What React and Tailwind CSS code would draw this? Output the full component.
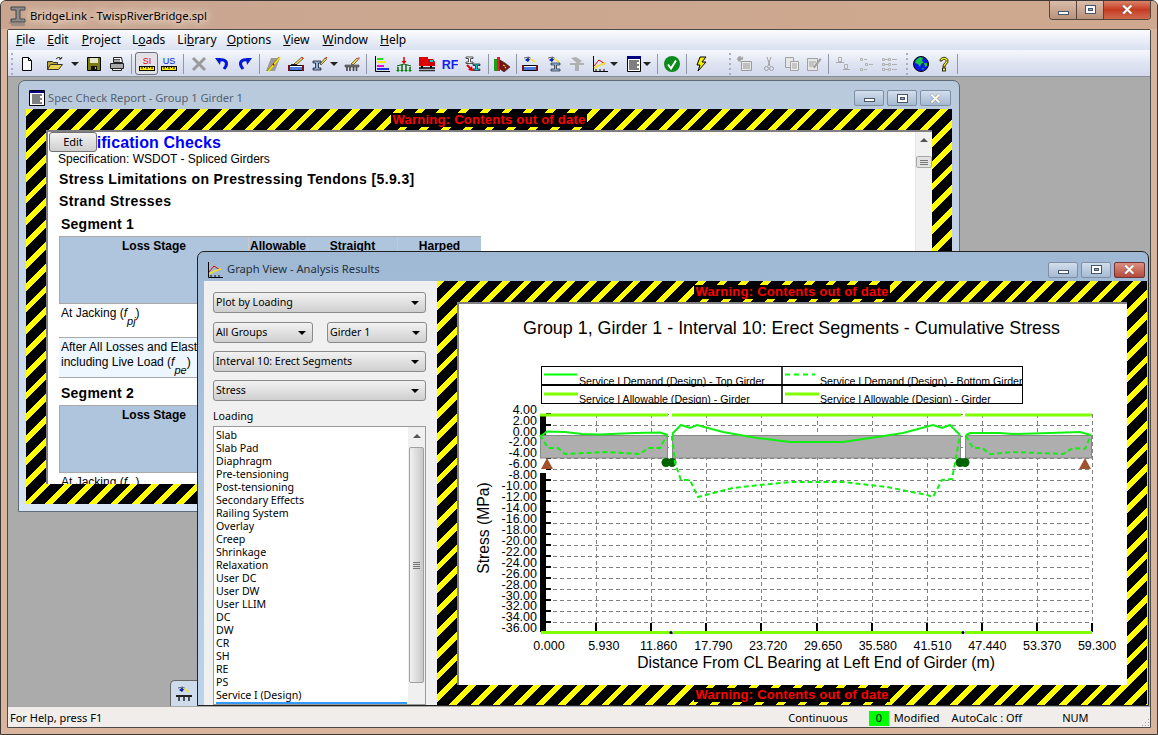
import React from 'react';

const UI = "[font-family:'Noto_Sans',sans-serif]";
const HAZARD = 'bg-[repeating-linear-gradient(135deg,#ffff00_0,#ffff00_5.5px,#000_5.5px,#000_15.4px)]';

// --- toolbar icons, all on a 16 box ---
const Svg = ({ children }) => (
  <svg width="16" height="16" viewBox="0 0 16 16" className="block">{children}</svg>
);

const NewIcon = () => <Svg><path d="M3.5 1.5h6l3 3v10h-9z" fill="#fff" stroke="#000" /><path d="M9.5 1.5v3h3" fill="none" stroke="#000" /></Svg>;
const OpenIcon = () => (
  <svg width="18" height="16" viewBox="0 0 18 16" className="block">
    <path d="M1.5 5.5h5l1 1h4v7h-10z" fill="#b8a53a" stroke="#333" />
    <path d="M1.5 13.5l3-5h12l-4 5z" fill="#e8d24a" stroke="#333" />
    <path d="M10 3c2-2 4-2 5 0M15 3l1-2M15 3l-2 0" fill="none" stroke="#111" />
  </svg>
);
const SaveIcon = () => <Svg><path d="M1.5 1.5h13v13h-13z" fill="#7b7b12" stroke="#000" /><path d="M4 2h8v5H4z" fill="#e6e6c8" /><path d="M5 10h6v4H5z" fill="#111" /><path d="M9 11h1v2H9z" fill="#bbb" /></Svg>;
const PrintIcon = () => <Svg><path d="M4.5 1.5h8l1 5h-9z" fill="#fff" stroke="#222" /><path d="M1.5 7.5h13v5h-13z" fill="#a8a8a8" stroke="#222" /><path d="M3.5 12.5h9v2h-9z" fill="#fff" stroke="#222" /><path d="M5 3.5h6M5 5h6" stroke="#555" /></Svg>;
const Ruler = ({ label, color }) => (
  <svg width="16" height="16" viewBox="0 0 16 16" className="block">
    <text x="8" y="8" textAnchor="middle" fontSize="9" fontFamily="Liberation Sans" fill={color}>{label}</text>
    <rect x="0.5" y="10.5" width="15" height="4" fill="#ffe800" stroke="#000" />
    <path d="M3 11v2M5.5 11v1M8 11v2M10.5 11v1M13 11v2" stroke="#000" />
  </svg>
);
const CrossIcon = () => <Svg><path d="M2 2l12 12M14 2L2 14" stroke="#9a9a9a" strokeWidth="3" /></Svg>;
const UndoIcon = () => <Svg><path d="M4 5c5-3 10 0 8 5l-2 3" fill="none" stroke="#0018d8" strokeWidth="3" /><path d="M1 2l6 0-1 7z" fill="#0018d8" /></Svg>;
const RedoIcon = () => <Svg><path d="M12 5C7 2 2 5 4 10l2 3" fill="none" stroke="#0018d8" strokeWidth="3" /><path d="M15 2l-6 0 1 7z" fill="#0018d8" /></Svg>;
const PencilBeam = () => <Svg><path d="M1 15l5-13h9l-5 13z" fill="#9a9a9a" /><path d="M3 15L15 1" stroke="#f5e400" strokeWidth="2" /><path d="M8 9l1-1" stroke="#d00" strokeWidth="2" /><path d="M2 15L14 1" stroke="#333" strokeWidth="0.5" /></Svg>;
const Deck = ({ top }) => (
  <Svg>
    {top}
    <path d="M0.5 9.5h15v5h-15z" fill="#fff" stroke="#000" />
    <path d="M2 11h12v3H2z" fill="#4b7be0" />
    <path d="M0 9h2v6H0zM14 9h2v6h-2z" fill="#7a1010" />
  </Svg>
);
const Pencil = <g><path d="M6 8l8-7 1.5 1.5L8 9z" fill="#f2d23c" stroke="#222" strokeWidth="0.6" /><path d="M13 1l2 0 0 2z" fill="#d02020" /><path d="M3 8.5h6" stroke="#222" /></g>;
const IPencil = () => (
  <Svg>
    <path d="M2 5h8v2H7.5v5H10v2H2v-2h2.5V7H2z" fill="#8fb4e6" stroke="#1a1a1a" strokeWidth="0.8" />
    <path d="M9 8l5-6 1.5 1.5L10 9z" fill="#f2d23c" stroke="#222" strokeWidth="0.6" />
    <path d="M14 1l2 0 0 2z" fill="#d02020" />
  </Svg>
);
const BrushIcon = () => <Svg><path d="M7 8l6-6 1.5 1.5L9 9z" fill="#f2d23c" stroke="#222" strokeWidth="0.6" /><path d="M13.5 1.5l2 0 0 2z" fill="#d02020" /><path d="M1 9h14v2H1z" fill="#777" stroke="#222" strokeWidth="0.5" /><path d="M3 11v4M6 11v4M9.5 11v4M12.5 11v4" stroke="#444" strokeWidth="1.6" /></Svg>;
const BarsIcon = () => <Svg><path d="M1.5 0v15.5H16" fill="none" stroke="#000" /><path d="M3 2h6v2H3z" fill="#1ee01e" /><path d="M3 5h9v2H3z" fill="#f4f000" /><path d="M3 9h7v2H3z" fill="#e010d0" /><path d="M3 12h12v2H3z" fill="#2030e0" /></Svg>;
const LoadsIcon = () => <Svg><path d="M8 1v5" stroke="#e00000" strokeWidth="1.5" /><path d="M5.5 5h5L8 8z" fill="#e00000" /><path d="M1 10l7-2 7 2" fill="none" stroke="#006000" /><path d="M2 11v4M6 9v6M10 9v6M14 11v4" stroke="#006000" strokeWidth="1.4" /><path d="M0 14h4l-2 2zM4 14h4l-2 2zM8 14h4l-2 2zM12 14h4l-2 2z" fill="#008000" /></Svg>;
const TruckIcon = () => <Svg><path d="M0 1h9v9H0z" fill="#e00000" /><path d="M9 3h5l2 3v4H9z" fill="#d00000" /><path d="M11 4h3v2h-3z" fill="#18c8c8" /><path d="M0 12h16" stroke="#000" strokeWidth="1.5" /><path d="M2 10h2v2H2zM11 10h2v2h-2z" fill="#000" /><path d="M0 14.5h16" stroke="#333" strokeWidth="1.5" /></Svg>;
const RfIcon = () => <Svg><text x="8" y="12.5" textAnchor="middle" fontSize="12.5" fontWeight="700" fontFamily="Liberation Sans" fill="#1020f0">RF</text></Svg>;
const BeamArrows = () => <Svg><path d="M1 1h7v1.5H5.5V6H8v1.5H1V6h2.5V2.5H1z" fill="#fff" stroke="#111" strokeWidth="0.7" /><path d="M8 8h7v1.5h-2.5V13H15v1.5H8V13h2.5V9.5H8z" fill="#20c8c8" stroke="#111" strokeWidth="0.7" /><path d="M2 9l5 5" stroke="#e00000" strokeWidth="2" /><path d="M8 15l-1-5-4 4z" fill="#e00000" /></Svg>;
const BookIcon = () => <Svg><path d="M0 3h3v12H0z" fill="#18a018" /><path d="M3 1h3v14H3z" fill="#e02020" /><path d="M6 4l5 3 5 4-6 5-4-3z" fill="#7a1515" stroke="#222" strokeWidth="0.6" /><path d="M9 9l2 1M11 12l1-1" stroke="#e8c040" strokeWidth="1.2" /></Svg>;
const EyeTop = <g><path d="M3 4l4-3 2 1-3 4z" fill="#0a20c0" /><path d="M7 2l6 4" stroke="#f2e020" strokeWidth="1.5" /><path d="M2 2l5-1" stroke="#666" /></g>;
const BeamEye = () => <Svg>{EyeTop}<path d="M5 7h9v2h-3.5v4H14v2H5v-2h3.5V9H5z" fill="#8fb4e6" stroke="#222" strokeWidth="0.7" /></Svg>;
const GrayBeam = () => <Svg><path d="M2 2l5-1 6 4-4 3z" fill="#b0b0b0" /><path d="M1 7h14v2h-5v6H6V9H1z" fill="#b0b0b0" /></Svg>;
const ChartIcon = () => <Svg><path d="M1.5 0v15.5H16" fill="none" stroke="#000" /><path d="M2 10l5-6 6 4" fill="none" stroke="#e00000" /><path d="M2 12l6-3 6-2" fill="none" stroke="#f2e020" strokeWidth="1.5" /><path d="M4 13v2M8 13v2M12 13v2" stroke="#000" /></Svg>;
const ReportIcon = () => <Svg><path d="M1.5 0.5h13v15h-13z" fill="#fff" stroke="#000" /><path d="M1 0h14v3H1z" fill="#000080" /><path d="M3 5h10M3 7h8M3 9h10M3 11h8M3 13h10" stroke="#000" /></Svg>;
const CheckIcon = () => <Svg><circle cx="8" cy="8" r="8" fill="#0c8a1c" /><path d="M4 8.5l3 4 5-8" fill="none" stroke="#fff" strokeWidth="2" /></Svg>;
const BoltIcon = () => <Svg><path d="M7 1h6L9 6h4l-8 9 2-6H4z" fill="#f8f000" stroke="#000" /></Svg>;
const GrayDoc = () => <Svg><path d="M4.5 5.5h10v9h-10z" fill="#e6e6e6" stroke="#9a9a9a" /><path d="M6 8h7M6 10h7M6 12h7" stroke="#9a9a9a" /><path d="M1 1l3 3M6 1L1 5M3 0v6M0 3h6" stroke="#a0a0a0" strokeWidth="1.4" /></Svg>;
const ScissorsIcon = () => <Svg><path d="M6 1l3 9M10 1L7 10" stroke="#a0a0a0" /><circle cx="5.5" cy="12.5" r="2" fill="none" stroke="#a0a0a0" /><circle cx="10.5" cy="12.5" r="2" fill="none" stroke="#a0a0a0" /></Svg>;
const CopyIcon = () => <Svg><path d="M1.5 1.5h8v10h-8z" fill="#e6e6e6" stroke="#a0a0a0" /><path d="M6.5 5.5h8v9h-8z" fill="#eee" stroke="#a0a0a0" /><path d="M8 8h5M8 10h5M8 12h5" stroke="#a0a0a0" /></Svg>;
const PasteEdit = () => <Svg><path d="M1.5 2.5h10v12h-10z" fill="#e6e6e6" stroke="#a0a0a0" /><path d="M3 6h7M3 8h5M3 10h5" stroke="#a0a0a0" /><path d="M7 11l7-9 1.5 1.5-7 9z" fill="#a0a0a0" /></Svg>;
const Align1 = () => <Svg><path d="M3.5 1.5h3v4h-3zM9.5 8.5h3v4h-3z" fill="none" stroke="#b0b0b0" /><path d="M1 6.5h8M8 13.5h7" stroke="#a8a8a8" /></Svg>;
const Align2 = () => <Svg><path d="M1.5 2.5h2v2h-2zM6.5 7.5h2v2h-2zM1.5 12.5h2v2h-2z" fill="none" stroke="#b0b0b0" /><path d="M5 3.5h3M10 8.5h4M5 13.5h3" stroke="#b0b0b0" /></Svg>;
const Align3 = () => <Svg><path d="M0.5 2.5h2v2h-2zM6.5 2.5h2v2h-2zM0.5 7.5h2v2h-2zM6.5 7.5h2v2h-2zM0.5 12.5h2v2h-2zM6.5 12.5h2v2h-2z" fill="none" stroke="#b0b0b0" /><path d="M3 3.5h3M10 3.5h5M3 8.5h3M10 8.5h5M3 13.5h3M10 13.5h5" stroke="#b0b0b0" /></Svg>;
const GlobeIcon = () => <Svg><circle cx="8" cy="8" r="7.5" fill="#0818e8" stroke="#000" /><path d="M3 4l4-3 3 1-1 3 2 1-3 2-1 3-2-3-3-1zM11 7l3 0 0 3-2 1zM9 12l2 0-1 2z" fill="#18c838" /></Svg>;
const HelpIcon = () => <Svg><path d="M4 5c0-5 8-5 8 0 0 3-3 3-3 6H7c0-4 3-4 3-6 0-2-4-2-4 0z" fill="#f8f000" stroke="#000" strokeWidth="0.8" /><rect x="6.5" y="12" width="3" height="3" fill="#f8f000" stroke="#000" strokeWidth="0.8" /></Svg>;

const Arrow = () => <span className="block w-0 h-0 border-x-[4px] border-x-transparent border-t-[4px] border-t-[#222]" />;
const Sep = ({ c }) => <span className={`block w-px h-[20px] bg-[#8f97a8] ${c}`} />;
const Grip = ({ c }) => (
  <span className={`flex flex-col gap-[3px] w-[3px] ${c}`}>
    {[0, 1, 2, 3, 4].map((i) => <span key={i} className="block w-[2px] h-[2px] bg-[#a9afbd]" />)}
  </span>
);
const Tool = ({ c, children }) => <span className={`block shrink-0 ${c}`}>{children}</span>;

const Toolbar = () => (
  <div className="h-[26px] flex items-center shrink-0 bg-gradient-to-b from-[#f4f6fc] via-[#dfe4f2] to-[#d2d9ec] border-b border-[#8b8f9c]">
    <Grip c="ml-[3px]" />
    <Tool c="ml-[5px]"><NewIcon /></Tool>
    <Tool c="ml-[11px]"><OpenIcon /></Tool>
    <Tool c="ml-[7px]"><Arrow /></Tool>
    <Tool c="ml-[7px]"><SaveIcon /></Tool>
    <Tool c="ml-[7px]"><PrintIcon /></Tool>
    <Sep c="ml-[6px]" />
    <Tool c="ml-[3px] w-[23px] h-[23px] flex items-center justify-center border border-[#6d7280] rounded-[3px] bg-[#e2e2e6]"><Ruler label="SI" color="#e00000" /></Tool>
    <Tool c="ml-[3px]"><Ruler label="US" color="#0020e0" /></Tool>
    <Sep c="ml-[6px]" />
    <Tool c="ml-[7px]"><CrossIcon /></Tool>
    <Tool c="ml-[7px]"><UndoIcon /></Tool>
    <Tool c="ml-[7px]"><RedoIcon /></Tool>
    <Sep c="ml-[6px]" />
    <Tool c="ml-[5px]"><PencilBeam /></Tool>
    <Tool c="ml-[7px]"><Deck top={Pencil} /></Tool>
    <Tool c="ml-[7px]"><IPencil /></Tool>
    <Tool c="ml-[3px]"><Arrow /></Tool>
    <Tool c="ml-[6px]"><BrushIcon /></Tool>
    <Sep c="ml-[6px]" />
    <Tool c="ml-[7px]"><BarsIcon /></Tool>
    <Tool c="ml-[6px]"><LoadsIcon /></Tool>
    <Tool c="ml-[7px]"><TruckIcon /></Tool>
    <Tool c="ml-[7px]"><RfIcon /></Tool>
    <Tool c="ml-[7px]"><BeamArrows /></Tool>
    <Sep c="ml-[7px]" />
    <Tool c="ml-[5px]"><BookIcon /></Tool>
    <Sep c="ml-[6px]" />
    <Tool c="ml-[5px]"><Deck top={EyeTop} /></Tool>
    <Tool c="ml-[8px]"><BeamEye /></Tool>
    <Tool c="ml-[7px]"><GrayBeam /></Tool>
    <Tool c="ml-[7px]"><ChartIcon /></Tool>
    <Tool c="ml-[2px]"><Arrow /></Tool>
    <Tool c="ml-[8px]"><ReportIcon /></Tool>
    <Tool c="ml-[1px]"><Arrow /></Tool>
    <Sep c="ml-[6px]" />
    <Tool c="ml-[6px]"><CheckIcon /></Tool>
    <Sep c="ml-[6px]" />
    <Tool c="ml-[6px]"><BoltIcon /></Tool>
    <Grip c="ml-[20px]" />
    <Tool c="ml-[5px]"><GrayDoc /></Tool>
    <Tool c="ml-[8px]"><ScissorsIcon /></Tool>
    <Tool c="ml-[7px]"><CopyIcon /></Tool>
    <Tool c="ml-[6px]"><PasteEdit /></Tool>
    <Sep c="ml-[6px]" />
    <Tool c="ml-[6px]"><Align1 /></Tool>
    <Tool c="ml-[8px]"><Align2 /></Tool>
    <Tool c="ml-[7px]"><Align3 /></Tool>
    <Grip c="ml-[8px]" />
    <Tool c="ml-[4px]"><GlobeIcon /></Tool>
    <Tool c="ml-[7px]"><HelpIcon /></Tool>
    <Sep c="ml-[5px]" />
  </div>
);

const Menu = () => {
  const items = [
    ['', 'F', 'ile', 'ml-[8px]'],
    ['', 'E', 'dit', 'ml-[12px]'],
    ['', 'P', 'roject', 'ml-[13px]'],
    ['L', 'o', 'ads', 'ml-[11px]'],
    ['Li', 'b', 'rary', 'ml-[12px]'],
    ['', 'O', 'ptions', 'ml-[10px]'],
    ['', 'V', 'iew', 'ml-[12px]'],
    ['', 'W', 'indow', 'ml-[13px]'],
    ['', 'H', 'elp', 'ml-[12px]'],
  ];
  return (
    <div className={`h-[21px] flex items-center shrink-0 text-[12px] text-black bg-gradient-to-b from-[#fbfcff] to-[#d9e0f0] border-b border-[#f4f6fc] ${UI}`}>
      {items.map(([a, b, c, m]) => (
        <span key={b + c} className={m}>{a}<span className="underline">{b}</span>{c}</span>
      ))}
    </div>
  );
};

// --- caption buttons ---
const MinGlyph = () => <span className="block w-[11px] h-[4px] bg-white border border-[#45566b]" />;
const MaxGlyph = () => <span className="flex items-center justify-center w-[11px] h-[9px] bg-white border border-[#45566b]"><span className="block w-[5px] h-[3px] bg-[#8ea4bd] border border-[#45566b]" /></span>;
const CloseGlyph = () => <span className="block text-[15px] leading-none font-bold text-white [font-family:'Liberation_Sans',sans-serif] [text-shadow:0_0_1px_#333]">✕</span>;

const ChildButtons = ({ active }) => (
  <div className="ml-auto flex gap-[3px] mr-[3px]">
    <span className="w-[30px] h-[16px] flex items-end justify-center pb-[3px] rounded-[2px] border border-[#7d8ea5] bg-gradient-to-b from-[#d2deec] to-[#a5bad2]"><MinGlyph /></span>
    <span className="w-[30px] h-[16px] flex items-center justify-center rounded-[2px] border border-[#7d8ea5] bg-gradient-to-b from-[#d2deec] to-[#a5bad2]"><MaxGlyph /></span>
    <span className={`w-[31px] h-[16px] flex items-center justify-center rounded-[2px] border ${active ? 'border-[#6f3530] bg-gradient-to-b from-[#dd8f82] to-[#b24a3c]' : 'border-[#7d8ea5] bg-gradient-to-b from-[#d2deec] to-[#a5bad2]'}`}><CloseGlyph /></span>
  </div>
);

// --- hazard frame with the red warning ---
const Warning = () => (
  <span className="block bg-black text-[#ff0000] font-bold text-[13px] leading-[14px] tracking-[0.25px] px-px [font-family:'Liberation_Sans',sans-serif] whitespace-nowrap">
    Warning: Contents out of date
  </span>
);

const Hazard = ({ className, children, bottomWarning }) => (
  <div className={`flex flex-col ${HAZARD} ${className}`}>
    <div className="h-[21px] shrink-0 flex items-center justify-center"><Warning /></div>
    <div className="flex-1 min-h-0 mx-[20px] flex">{children}</div>
    <div className="h-[20px] shrink-0 flex items-center justify-center">{bottomWarning && <Warning />}</div>
  </div>
);

// --- report behind ---
const Fp = ({ sub }) => (
  <span>(<i>f</i><sub className="italic text-[11px] align-[-5px] leading-none">{sub}</sub>)</span>
);
const HeaderRow = ({ h }) => (
  <div className={`grid grid-cols-[188px_58px_89px_83px] gap-x-px ${h} text-[12px] font-bold text-center leading-[15px]`}>
    <div className="bg-[#afc4dd] pt-[2px]">Loss Stage</div>
    <div className="bg-[#afc4dd] pt-[2px]">Allowable</div>
    <div className="bg-[#afc4dd] pt-[2px]">Straight</div>
    <div className="bg-[#afc4dd] pt-[2px]">Harped</div>
  </div>
);

const Report = () => (
  <div className="relative flex-1 min-w-0 overflow-hidden bg-white border-t-2 border-l-2 border-[#808080] flex [font-family:'Liberation_Sans',sans-serif] text-black">
    <div className="flex-1 min-w-0 pl-[10px]">
      <div className="h-[20px] text-[16px] leading-[21px] font-bold tracking-[0.1px] text-[#0000ff]">Specification Checks</div>
      <div className="text-[12px] leading-[14px]">Specification: WSDOT - Spliced Girders</div>
      <div className="ml-[1px] mt-[4px] text-[14px] leading-[18px] font-bold tracking-[0.38px]">Stress Limitations on Prestressing Tendons [5.9.3]</div>
      <div className="ml-[1px] mt-[4px] text-[14px] leading-[18px] font-bold tracking-[0.38px]">Strand Stresses</div>
      <div className="ml-[3px] mt-[5px] text-[14px] leading-[18px] font-bold tracking-[0.25px]">Segment 1</div>
      <div className="ml-[1px] mt-[3px] w-[422px] border-t border-x border-[#a9a9a9] bg-[#c8c8c8]">
        <HeaderRow h="h-[66px]" />
      </div>
      <div className="ml-[1px] w-[422px] h-[34px] border-t border-[#a9a9a9] bg-white text-[12px] px-[2px] pt-[2px] leading-[15px]">At Jacking <Fp sub="pj" /></div>
      <div className="ml-[1px] w-[422px] h-[41px] border-t border-b border-[#a9a9a9] bg-[#eef6ff] text-[12px] px-[2px] pt-[2px] leading-[15px]">
        After All Losses and Elastic Gains<br />including Live Load <Fp sub="pe" />
      </div>
      <div className="ml-[3px] mt-[6px] text-[14px] leading-[18px] font-bold tracking-[0.25px]">Segment 2</div>
      <div className="ml-[1px] mt-[3px] w-[422px] border-t border-x border-[#a9a9a9] bg-[#c8c8c8]">
        <HeaderRow h="h-[66px]" />
      </div>
      <div className="ml-[1px] w-[422px] border-t border-[#a9a9a9] text-[12px] px-[2px] pt-[2px] leading-[15px]">At Jacking <Fp sub="pj" /></div>
    </div>
    <div className="w-[17px] shrink-0 bg-[#f1f1f1] flex flex-col items-center pt-[6px] border-l border-[#e4e4e4]">
      <span className="block w-0 h-0 border-x-[4px] border-x-transparent border-b-[4px] border-b-[#555]" />
      <span className="mt-[14px] w-[16px] h-[12px] flex flex-col items-center justify-center gap-px bg-[#e2e2e2] border border-[#a8a8a8] rounded-[2px]">
        <span className="block w-[8px] h-px bg-[#777]" /><span className="block w-[8px] h-px bg-[#777]" /><span className="block w-[8px] h-px bg-[#777]" />
      </span>
    </div>
    <button className="absolute left-[1px] top-0 w-[48px] h-[20px] rounded-[3px] border border-[#707070] bg-gradient-to-b from-[#f2f2f2] to-[#cfcfcf] text-[11px] text-black [font-family:'Noto_Sans',sans-serif]">Edit</button>
  </div>
);

// --- graph panel ---
const Select = ({ c, children }) => (
  <div className={`h-[21px] flex items-center pl-[2px] pr-[6px] rounded-[3px] border border-[#8a8a8a] bg-gradient-to-b from-[#f2f2f2] to-[#cfcfcf] text-[10.6px] text-black ${c}`}>
    <span className="pt-[1px]">{children}</span>
    <span className="ml-auto block w-0 h-0 border-x-[4px] border-x-transparent border-t-[4px] border-t-black" />
  </div>
);

const LOADINGS = ['Slab', 'Slab Pad', 'Diaphragm', 'Pre-tensioning', 'Post-tensioning', 'Secondary Effects', 'Railing System', 'Overlay', 'Creep', 'Shrinkage', 'Relaxation', 'User DC', 'User DW', 'User LLIM', 'DC', 'DW', 'CR', 'SH', 'RE', 'PS', 'Service I (Design)'];

const Panel = () => (
  <div className={`w-[233px] shrink-0 bg-[#f0f0f0] pl-[9px] pt-[11px] flex flex-col overflow-hidden ${UI}`}>
    <Select c="w-[213px]">Plot by Loading</Select>
    <div className="flex gap-[14px] mt-[9px]">
      <Select c="w-[100px]">All Groups</Select>
      <Select c="w-[100px]">Girder 1</Select>
    </div>
    <Select c="w-[213px] mt-[8px]">Interval 10: Erect Segments</Select>
    <Select c="w-[213px] mt-[8px]">Stress</Select>
    <div className="mt-[8px] text-[10.6px] leading-[15px] text-black">Loading</div>
    <div className="mt-[2px] w-[213px] flex-1 min-h-0 bg-white border border-[#9a9a9a] flex overflow-hidden">
      <div className="flex-1 min-w-0 pt-[2px] pl-[2px] text-[10.6px] leading-[13px] text-black">
        {LOADINGS.map((l) => <div key={l} className="h-[13px] whitespace-nowrap">{l}</div>)}
        <div className="h-[13px] mr-[1px] bg-[#3399ff] text-white whitespace-nowrap">Service I Demand (Design)</div>
      </div>
      <div className="w-[17px] shrink-0 bg-[#f0f0f0] flex flex-col items-center pt-[7px]">
        <span className="block w-0 h-0 border-x-[4px] border-x-transparent border-b-[4px] border-b-[#555]" />
        <div className="mt-[9px] w-[15px] h-[236px] rounded-[2px] border border-[#a0a0a0] bg-gradient-to-r from-[#f2f2f2] to-[#c8c8c8] flex flex-col items-center justify-center gap-px">
          <span className="block w-[7px] h-px bg-[#777]" /><span className="block w-[7px] h-px bg-[#777]" /><span className="block w-[7px] h-px bg-[#777]" /><span className="block w-[7px] h-px bg-[#777]" />
        </div>
      </div>
    </div>
  </div>
);

// --- chart, in page coordinates ---
const TOP_L = '541,436 547,431.5 565,432 582,434 600,434.5 635,433 660,432.5 668,435';
const TOP_M = '672,440 673,433 681,425 690,428 697,425 723,432 757,438 790,442 843,442 877,437 903,433 933,425 942,428 950,425 960,435';
const TOP_R = '966,435 970,433 1000,433 1013,434 1050,433 1080,432 1091,435';
const BOT_L = '540,435 548,448 558,448 565,454 607,452 640,454 648,448 660,448 667,435';
const BOT_M = '672,436 675,463 681,480 690,480 698,497 733,488 760,485 790,482 843,482 887,487 927,495 933,497 942,480 952,479 955,463 960,435';
const BOT_R = '966,436 973,448 982,448 990,454 1013,452 1063,454 1073,448 1085,449 1091,435';
const XTICKS = [541, 596, 651, 706.3, 761.4, 816.5, 871.6, 926.7, 981.8, 1036.9, 1092];
const XLABELS = ['0.000', '5.930', '11.860', '17.790', '23.720', '29.650', '35.580', '41.510', '47.440', '53.370', '59.300'];
const YLABELS = ['4.00', '2.00', '0.00', '-2.00', '-4.00', '-6.00', '-8.00', '-10.00', '-12.00', '-14.00', '-16.00', '-18.00', '-20.00', '-22.00', '-24.00', '-26.00', '-28.00', '-30.00', '-32.00', '-34.00', '-36.00'];

const Chart = () => (
  <div className="flex-1 min-w-0 bg-white border-t-2 border-l-2 border-[#808080]">
    <svg width="668" height="381" viewBox="459 304 668 381" className="block" fontFamily="Liberation Sans" fill="#000">
      <text x="791.5" y="334" textAnchor="middle" fontSize="17.9">Group 1, Girder 1 - Interval 10: Erect Segments - Cumulative Stress</text>

      {/* legend */}
      <text x="579" y="385" fontSize="10.6">Service I Demand (Design) - Top Girder</text>
      <text x="820" y="385" fontSize="10.6">Service I Demand (Design) - Bottom Girder</text>
      <text x="579" y="403" fontSize="10.6">Service I Allowable (Design) - Girder</text>
      <text x="820" y="403" fontSize="10.6">Service I Allowable (Design) - Girder</text>
      <rect x="542" y="404" width="481" height="5" fill="#fff" />
      <rect x="541.5" y="366.5" width="481" height="37" fill="none" stroke="#000" />
      <path d="M541 385h482" stroke="#000" strokeWidth="2" />
      <path d="M782 366v38" stroke="#000" strokeWidth="1.5" />
      <path d="M544 374.5h33" stroke="#00ff00" strokeWidth="2" />
      <path d="M785 374.5h30" stroke="#00ff00" strokeWidth="2" strokeDasharray="5 4" />
      <path d="M544 394h34M785 394h34" stroke="#80ff00" strokeWidth="3" />

      {/* grid */}
      {YLABELS.map((_, i) => (
        <path key={i} d={`M546 ${Math.round(414 + i * 10.93) + 0.5}H1092`} stroke="#808080" strokeDasharray="4 3" />
      ))}
      {XTICKS.slice(1).map((x) => (
        <path key={x} d={`M${Math.round(x) + 0.5} 414V632`} stroke="#808080" strokeDasharray="4 3" />
      ))}

      {/* axis marks */}
      <rect x="540" y="414" width="6" height="21" fill="#000" />
      <rect x="540" y="473" width="6" height="159" fill="#000" />
      {YLABELS.map((_, i) => <rect key={i} x="546" y={Math.round(414 + i * 10.93) - 1} width="5" height="2" fill="#000" />)}
      {XTICKS.map((x) => <rect key={x} x={Math.round(x) - 1} y="623" width="2" height="9" fill="#000" />)}

      {/* girder segments */}
      <rect x="540.5" y="435.5" width="127" height="22.5" fill="#aeaeae" stroke="#888" />
      <rect x="672.5" y="435.5" width="288" height="22.5" fill="#aeaeae" stroke="#888" />
      <rect x="965.5" y="435.5" width="126" height="22.5" fill="#aeaeae" stroke="#888" />

      {/* supports */}
      <path d="M541 469l6-11 6 11zM1079 469l6-11 6 11z" fill="#a0522d" />
      <circle cx="666" cy="462.5" r="4.5" fill="#006400" />
      <circle cx="672" cy="462.5" r="4.5" fill="#006400" />
      <circle cx="960" cy="462.5" r="4.5" fill="#006400" />
      <circle cx="965" cy="462.5" r="4.5" fill="#006400" />

      {/* curves */}
      {[TOP_L, TOP_M, TOP_R].map((p) => <polyline key={p} points={p} fill="none" stroke="#10f010" strokeWidth="2" />)}
      {[BOT_L, BOT_M, BOT_R].map((p) => <polyline key={p} points={p} fill="none" stroke="#10f010" strokeWidth="2" strokeDasharray="5 3" />)}

      {/* allowable */}
      <path d="M540 415h128M672 415h289M965 415h127M541 632.5h129M673 632.5h289M965 632.5h127" stroke="#80ff00" strokeWidth="3" />
      <circle cx="671" cy="632.5" r="1.5" /><circle cx="963" cy="632.5" r="1.5" />

      {/* axis labels */}
      {YLABELS.map((l, i) => <text key={l} x="537" y={413.7 + i * 10.93} textAnchor="end" fontSize="12.5">{l}</text>)}
      {XLABELS.map((l, i) => <text key={l} x={549 + i * 54.8} y="650" textAnchor="middle" fontSize="12.5">{l}</text>)}
      <text x="816" y="668" textAnchor="middle" fontSize="15.7">Distance From CL Bearing at Left End of Girder (m)</text>
      <text transform="translate(489 528) rotate(-90)" textAnchor="middle" fontSize="15.7">Stress (MPa)</text>
    </svg>
  </div>
);

const StatusBar = () => (
  <div className={`h-[21px] shrink-0 bg-[#f0edeb] border-t border-[#a8a8a8] pt-[2px] flex items-center text-[11px] text-black ${UI} relative`}>
    <span className="ml-[2px]">For Help, press F1</span>
    <span className="ml-[686px]">Continuous</span>
    <span className="ml-[21px] w-[20px] h-[15px] flex items-center justify-center bg-[#00ff00]">0</span>
    <span className="ml-[5px]">Modified</span>
    <span className="ml-[12px]">AutoCalc : Off</span>
    <span className="ml-[40px]">NUM</span>
    <svg width="10" height="10" viewBox="0 0 10 10" className="absolute right-0 bottom-0"><path d="M8 2h1v1H8zM8 5h1v1H8zM5 5h1v1H5zM8 8h1v1H8zM5 8h1v1H5zM2 8h1v1H2z" fill="#a0a0a0" /></svg>
  </div>
);

export default function App() {
  return (
    <div className="w-[1158px] h-[735px] overflow-hidden flex flex-col bg-[#d9b59d] border border-[#3c3836] rounded-t-[6px]">
      {/* title bar */}
      <div className="h-[28px] shrink-0 flex items-start bg-gradient-to-r from-[#c9a590] to-[#cfa98f]">
        <svg width="20" height="20" viewBox="0 0 20 20" className="ml-[7px] mt-[5px] shrink-0">
          <path d="M3 1h14v3h-5v9h5v3H3v-3h5V4H3z" fill="#8b8b8b" stroke="#444" />
          <path d="M1 17h16M3 19h14" stroke="#777" />
        </svg>
        <span className={`ml-[2px] mt-[6px] text-[11.3px] leading-[18px] text-black ${UI} [text-shadow:0_0_6px_#f5e6da,0_0_10px_#f5e6da,0_0_14px_#f5e6da]`}>BridgeLink - TwispRiverBridge.spl</span>
        <div className="ml-auto mr-[6px] flex h-[20px] -mt-px border border-t-0 border-[#54463c] rounded-b-[4px] overflow-hidden">
          <span className="w-[27px] flex items-end justify-center pb-[4px] bg-gradient-to-b from-[#dcc0ae] to-[#b9917a] border-r border-[#54463c]"><MinGlyph /></span>
          <span className="w-[27px] flex items-center justify-center bg-gradient-to-b from-[#dcc0ae] to-[#b9917a] border-r border-[#54463c]"><MaxGlyph /></span>
          <span className="w-[46px] flex items-center justify-center bg-gradient-to-b from-[#dd8a70] via-[#c53a20] to-[#d06a50]"><CloseGlyph /></span>
        </div>
      </div>

      {/* client */}
      <div className="mx-[6px] mb-[6px] flex-1 min-h-0 flex flex-col border border-[#4a4a4a] rounded-t-[2px]">
        <Menu />
        <Toolbar />
        <div className="relative flex-1 min-h-0 bg-[#ababab] overflow-hidden">
          {/* report window */}
          <div className="absolute left-[10px] top-[3px] w-[942px] h-[432px] flex flex-col rounded-t-[7px] border border-[#5f6b78] bg-gradient-to-b from-[#b9c9dc] to-[#d7e5f4]">
            <div className={`h-[28px] shrink-0 flex items-center pt-[6px] pl-[10px] pr-[5px] text-[11.2px] text-[#55616f] ${UI}`}>
              <svg width="16" height="16" viewBox="0 0 16 16"><path d="M.5.5h15v15H.5z" fill="#fff" stroke="#000" /><path d="M1 1h14v2H1z" fill="#000080" /><path d="M3 5h10M3 7h8M3 9h10M3 11h8M3 13h10" stroke="#000" /></svg>
              <span className="ml-[3px]">Spec Check Report - Group 1 Girder 1</span>
              <ChildButtons />
            </div>
            <Hazard className="mx-[7px] flex-1 min-h-0 mb-[7px]"><Report /></Hazard>
          </div>

          {/* graph window */}
          <div className="absolute left-[189px] top-[174px] w-[952px] h-[455px] flex flex-col rounded-t-[7px] border border-[#222] bg-gradient-to-b from-[#9fb8d4] to-[#bcd3ea]">
            <div className={`h-[29px] shrink-0 flex items-center pt-[6px] pl-[9px] text-[11.2px] text-[#25303c] ${UI}`}>
              <ChartIcon />
              <span className="ml-[4px]">Graph View - Analysis Results</span>
              <ChildButtons active />
            </div>
            <div className="flex flex-1 min-h-0 pl-[6px] pr-[1px]">
              <Panel />
              <Hazard className="flex-1 min-w-0" bottomWarning><Chart /></Hazard>
            </div>
          </div>

          {/* minimized tab */}
          <div className="absolute left-[162px] top-[603px] w-[27px] h-[27px] rounded-tl-[5px] border border-r-0 border-[#666] bg-[#cddbea] flex items-center justify-center">
            <Svg>{EyeTop}<path d="M0 9h16v2H0z" fill="#222" /><path d="M3 11v4M8 11v4M13 11v4" stroke="#222" strokeWidth="1.5" /></Svg>
          </div>
        </div>
        <StatusBar />
      </div>
    </div>
  );
}
